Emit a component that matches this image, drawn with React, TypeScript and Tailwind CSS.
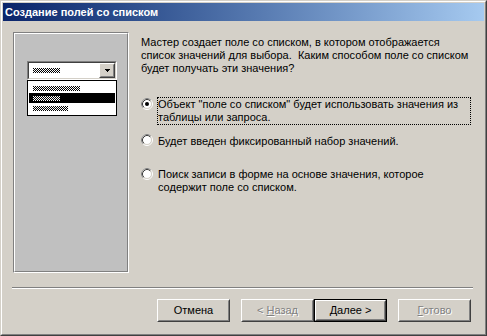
import * as React from 'react'

/**
 * Windows 2000 style "Combo Box Wizard" dialog (Access, Russian UI)
 */

const font = "font-['Liberation_Sans','DejaVu_Sans',sans-serif]"

function Dither({ w, color }: { w: number; color: string }) {
  const id = 'd' + React.useId().replace(/[^a-zA-Z0-9]/g, '')
  return (
    <svg width={w} height={5} className="block shrink-0" shapeRendering="crispEdges">
      <defs>
        <pattern id={id} width="2" height="2" patternUnits="userSpaceOnUse">
          <rect x="0" y="0" width="1" height="1" fill={color} />
          <rect x="1" y="1" width="1" height="1" fill={color} />
        </pattern>
      </defs>
      <rect x="0" y="0" width={w} height={5} fill={`url(#${id})`} />
    </svg>
  )
}

function Radio({ checked }: { checked?: boolean }) {
  return (
    <svg width="12" height="12" viewBox="0 0 12 12" className="block shrink-0">
      <circle cx="6" cy="6" r="5.5" fill="none" stroke="#ffffff" />
      <path d="M2.11 9.89 A5.5 5.5 0 0 1 9.89 2.11" fill="none" stroke="#808080" />
      <circle cx="6" cy="6" r="4.5" fill="#ffffff" stroke="#d4d0c8" />
      <path d="M2.82 9.18 A4.5 4.5 0 0 1 9.18 2.82" fill="none" stroke="#404040" />
      {checked && <circle cx="6" cy="6" r="2" fill="#000000" />}
    </svg>
  )
}

function Raised({ children, className = '' }: { children?: React.ReactNode; className?: string }) {
  return (
    <div className={`border border-white border-b-[#404040] border-r-[#404040] ${className}`}>
      <div className="h-full border border-[#d4d0c8] border-b-[#808080] border-r-[#808080] flex items-center justify-center">
        {children}
      </div>
    </div>
  )
}

function WizButton({
  children,
  disabled,
  isDefault,
}: {
  children: React.ReactNode
  disabled?: boolean
  isDefault?: boolean
}) {
  const label = (
    <span
      className={
        disabled
          ? 'text-[#808080] [text-shadow:1px_1px_0_#ffffff]'
          : 'text-black'
      }
    >
      {children}
    </span>
  )
  if (isDefault) {
    return (
      <div className="w-[73px] h-[23px] border border-black">
        <Raised className="h-full">{label}</Raised>
      </div>
    )
  }
  return <Raised className="w-[73px] h-[23px]">{label}</Raised>
}

function ComboPreview() {
  return (
    <div className="w-[90px]">
      <div className="h-[19px] border border-[#808080] border-b-white border-r-white">
        <div className="h-full border border-[#404040] border-b-[#d4d0c8] border-r-[#d4d0c8] bg-white flex items-center">
          <div className="flex-1 pl-[4px]">
            <Dither w={27} color="#000000" />
          </div>
          <Raised className="w-[16px] h-full bg-[#d4d0c8]">
            <svg width="5" height="3" viewBox="0 0 5 3" className="block" shapeRendering="crispEdges">
              <polygon points="0,0 5,0 2.5,3" fill="#000000" />
            </svg>
          </Raised>
        </div>
      </div>
      <div className="border border-black bg-white pt-[2px] pb-[2px]">
        <div className="h-[10px] mx-px pl-[4px] flex items-center">
          <Dither w={47} color="#000000" />
        </div>
        <div className="h-[10px] mx-px pl-[4px] flex items-center bg-black">
          <Dither w={27} color="#ffffff" />
        </div>
        <div className="h-[10px] mx-px pl-[4px] flex items-center">
          <Dither w={35} color="#000000" />
        </div>
      </div>
    </div>
  )
}

export default function App() {
  return (
    <div className={`${font} text-[11px] leading-[13px] text-black`}>
      <div className="w-[487px] h-[336px] border border-[#d4d0c8] border-b-[#404040] border-r-[#404040]">
        <div className="h-full border border-white border-b-[#808080] border-r-[#808080] p-px flex flex-col bg-[#d4d0c8]">
          {/* title bar */}
          <div className="h-[18px] shrink-0 bg-linear-to-r from-[#0a246a] to-[#a6caf0] flex items-center pl-[2px] pt-px">
            <span className="text-white font-bold text-[11px] whitespace-nowrap">
              Создание полей со списком
            </span>
          </div>

          {/* body */}
          <div className="flex-1 flex flex-col">
            <div className="flex pl-[10px] pt-[11px]">
              <div className="w-[116px] h-[241px] shrink-0 border border-[#808080] border-b-white border-r-white">
                <div className="h-full border border-white border-b-[#808080] border-r-[#808080] bg-[#c0c0c0] pl-[12px] pt-[27px]">
                  <ComboPreview />
                </div>
              </div>

              <div className="ml-[12px] pt-[4px] flex flex-col">
                <p className="whitespace-nowrap">
                  Мастер создает поле со списком, в котором отображается
                  <br />
                  список значений для выбора.{'\u00a0 '}Каким способом поле со списком
                  <br />
                  будет получать эти значения?
                </p>

                <div className="mt-[22px] flex items-start gap-[4px]">
                  <div className="pt-[1px]">
                    <Radio checked />
                  </div>
                  <div className="w-[314px] border border-dotted border-black whitespace-nowrap">
                    Объект "поле со списком" будет использовать значения из
                    <br />
                    таблицы или запроса.
                  </div>
                </div>

                <div className="mt-[9px] flex items-start gap-[4px]">
                  <div className="pt-[0px]">
                    <Radio />
                  </div>
                  <div className="border border-transparent whitespace-nowrap">
                    Будет введен фиксированный набор значений.
                  </div>
                </div>

                <div className="mt-[18px] flex items-start gap-[4px]">
                  <div className="pt-[1px]">
                    <Radio />
                  </div>
                  <div className="border border-transparent whitespace-nowrap">
                    Поиск записи в форме на основе значения, которое
                    <br />
                    содержит поле со списком.
                  </div>
                </div>
              </div>
            </div>

            {/* separator */}
            <div className="mt-[14px] ml-[9px] w-[461px] h-[2px] border-t border-[#808080] border-b border-b-white" />

            {/* buttons */}
            <div className="mt-[10px] pl-[154px] flex">
              <WizButton>Отмена</WizButton>
              <div className="ml-[11px] flex">
                <WizButton disabled>
                  &lt; <span className="underline">Н</span>азад
                </WizButton>
                <WizButton isDefault>
                  <span className="underline">Д</span>алее &gt;
                </WizButton>
              </div>
              <div className="ml-[11px]">
                <WizButton disabled>
                  <span className="underline">Г</span>отово
                </WizButton>
              </div>
            </div>
          </div>
        </div>
      </div>
    </div>
  )
}
